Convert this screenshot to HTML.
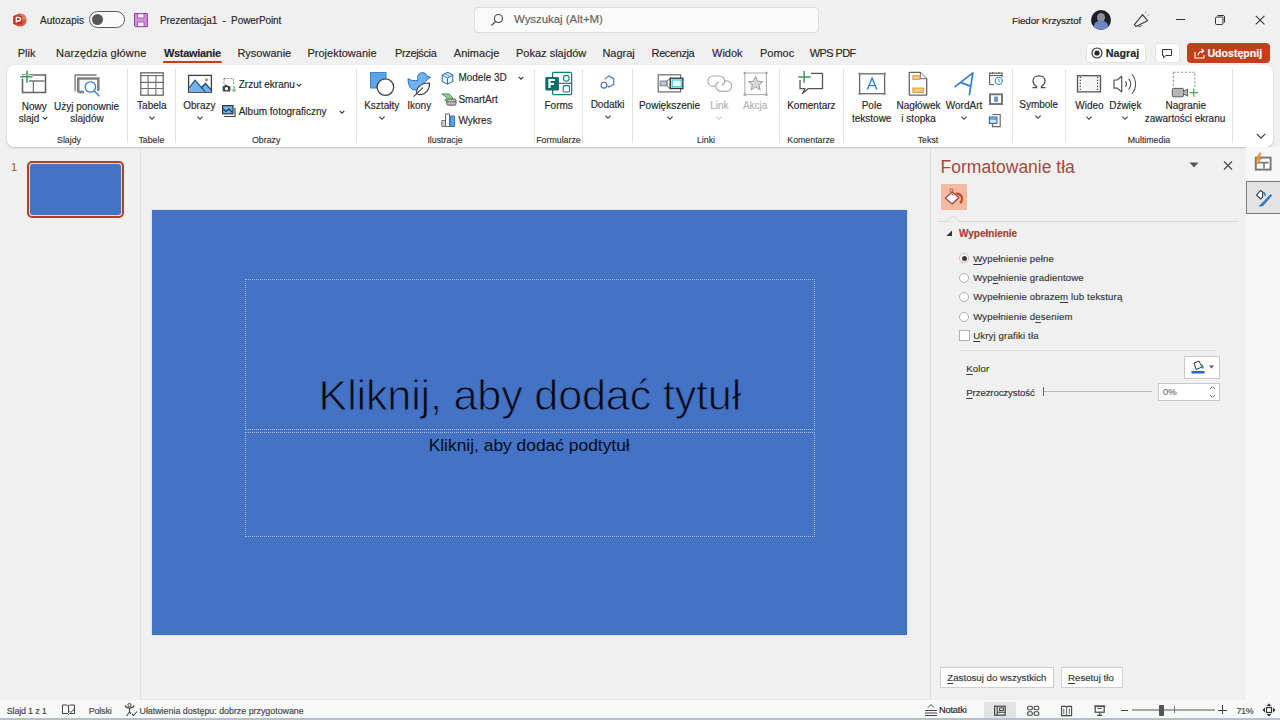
<!DOCTYPE html>
<html><head><meta charset="utf-8"><style>
html,body{margin:0;padding:0;}
body{width:1280px;height:720px;overflow:hidden;position:relative;font-family:"Liberation Sans", sans-serif;}
#root{position:absolute;left:0;top:0;width:1280px;height:720px;overflow:hidden;}
.t{position:absolute;white-space:nowrap;font-family:"Liberation Sans", sans-serif;-webkit-text-stroke:0.15px currentColor;}
u{text-decoration:underline;text-underline-offset:1.5px;text-decoration-thickness:1px}
svg{overflow:visible}
</style></head><body>
<div id="root"><div style="position:absolute;left:0px;top:0px;width:1280px;height:720px;background:#f0f0f0"></div><svg style="position:absolute;left:11px;top:12px" width="18" height="18" viewBox="0 0 18 18" fill="none"><circle cx="9" cy="8" r="6.6" fill="#d9573a"/><path d="M9 1.4 A6.6 6.6 0 0 1 15.6 8 H9 Z" fill="#ee7b5a"/><rect x="2.2" y="3.5" width="9" height="9" rx="1.2" fill="#b63a22"/><path d="M5.3 10.8 V5.4 H7.5 C8.9 5.4 9.6 6.1 9.6 7.2 C9.6 8.3 8.9 9 7.5 9 H5.3" stroke="#fff" stroke-width="1.3"/></svg><div class="t" style="left:40.00px;top:15.84px;font-size:10px;line-height:10px;color:#262626;">Autozapis</div><div style="position:absolute;left:89px;top:11px;width:36px;height:17px;border:1px solid #5a5a5a;border-radius:9px;box-sizing:border-box;background:#fafafa"></div><div style="position:absolute;left:92.3px;top:14.3px;width:11px;height:11px;border-radius:50%;background:#585858"></div><svg style="position:absolute;left:132px;top:11px" width="18" height="18" viewBox="0 0 18 18" fill="none"><path d="M2.5 2.5 H15.3 V15.7 H3.5 L2.5 14.7 Z" fill="#d68ee3" stroke="#8b3d9c" stroke-width="1"/><rect x="5.6" y="2.8" width="6.4" height="4.2" fill="#fff" stroke="#9b4bab" stroke-width=".9"/><rect x="5.6" y="11" width="6.4" height="4.4" fill="#fff" stroke="#9b4bab" stroke-width=".9"/></svg><div class="t" style="left:160.00px;top:15.84px;font-size:10px;line-height:10px;color:#262626;letter-spacing:-0.1px;">Prezentacja1&nbsp; -&nbsp; PowerPoint</div><div style="position:absolute;left:474px;top:7px;width:345px;height:26px;background:#fafafa;border:1px solid #dcdcdc;border-radius:4px;box-sizing:border-box"></div><svg style="position:absolute;left:490px;top:13px" width="14" height="14" viewBox="0 0 14 14" fill="none"><circle cx="8.5" cy="5.5" r="4" stroke="#444" stroke-width="1.1"/><path d="M5.6 8.4 L1.5 12.5" stroke="#444" stroke-width="1.2"/></svg><div class="t" style="left:514.00px;top:14.15px;font-size:11.4px;line-height:11.4px;color:#616161;">Wyszukaj (Alt+M)</div><div class="t" style="left:1012.00px;top:16.00px;font-size:9.8px;line-height:9.8px;color:#262626;letter-spacing:-0.1px;">Fiedor Krzysztof</div><div style="position:absolute;left:1091px;top:10px;width:20px;height:20px;border-radius:50%;overflow:hidden;background:#1c1f2a"><div style="position:absolute;left:6px;top:3px;width:8px;height:9px;border-radius:50%;background:#8c8f9c"></div><div style="position:absolute;left:3px;top:11px;width:14px;height:12px;border-radius:40%;background:#6a88c0"></div></div><svg style="position:absolute;left:1132px;top:10px" width="18" height="18" viewBox="0 0 18 18" fill="none"><path d="M2.4 14.6 L10.6 4.6 L15.6 10.8 L4 16.4 Z" stroke="#3a3a3a" stroke-width="1.1" stroke-linejoin="round"/><path d="M6 15 C6.2 17.2 9 17.4 9.4 15.2" stroke="#3a3a3a" stroke-width="1"/><path d="M13 3.2 L14.2 1.6 M15.4 5.4 L17 4.4" stroke="#5a8fc0" stroke-width=".9"/></svg><div style="position:absolute;left:1176px;top:19px;width:8.5px;height:1px;background:#333"></div><svg style="position:absolute;left:1214px;top:14px" width="12" height="12" viewBox="0 0 12 12" fill="none"><rect x="1.5" y="3" width="7.5" height="7.5" rx="1.2" stroke="#333" stroke-width="1"/><path d="M3.5 1.5 H9 a1.5 1.5 0 0 1 1.5 1.5 V8.5" stroke="#333" stroke-width="1"/></svg><svg style="position:absolute;left:1254px;top:14px" width="12" height="12" viewBox="0 0 12 12" fill="none"><path d="M1.8 1.8 L10.4 10.4 M10.4 1.8 L1.8 10.4" stroke="#333" stroke-width="1.05"/></svg><div class="t" style="left:17.7px;top:47.99px;font-size:11px;line-height:11px;color:#262626;letter-spacing:0px">Plik</div><div class="t" style="left:56px;top:47.99px;font-size:11px;line-height:11px;color:#262626;letter-spacing:0.2px">Narzędzia główne</div><div class="t" style="left:162.4px;top:47.99px;font-size:11px;line-height:11px;color:#262626;font-weight:bold;width:60px;text-align:center;white-space:nowrap;letter-spacing:-0.3px">Wstawianie</div><div class="t" style="left:237.4px;top:47.99px;font-size:11px;line-height:11px;color:#262626;letter-spacing:0px">Rysowanie</div><div class="t" style="left:307.5px;top:47.99px;font-size:11px;line-height:11px;color:#262626;letter-spacing:0px">Projektowanie</div><div class="t" style="left:395px;top:47.99px;font-size:11px;line-height:11px;color:#262626;letter-spacing:-0.35px">Przejścia</div><div class="t" style="left:453.8px;top:47.99px;font-size:11px;line-height:11px;color:#262626;letter-spacing:0.05px">Animacje</div><div class="t" style="left:516px;top:47.99px;font-size:11px;line-height:11px;color:#262626;letter-spacing:0px">Pokaz slajdów</div><div class="t" style="left:602.4px;top:47.99px;font-size:11px;line-height:11px;color:#262626;letter-spacing:0px">Nagraj</div><div class="t" style="left:651.6px;top:47.99px;font-size:11px;line-height:11px;color:#262626;letter-spacing:-0.4px">Recenzja</div><div class="t" style="left:712px;top:47.99px;font-size:11px;line-height:11px;color:#262626;letter-spacing:0px">Widok</div><div class="t" style="left:760px;top:47.99px;font-size:11px;line-height:11px;color:#262626;letter-spacing:0px">Pomoc</div><div class="t" style="left:809.7px;top:47.99px;font-size:11px;line-height:11px;color:#262626;letter-spacing:-0.6px">WPS PDF</div><div style="position:absolute;left:163px;top:61px;width:59px;height:2px;background:#c43e1c;border-radius:1px"></div><div style="position:absolute;left:1086px;top:43px;width:60px;height:20px;background:#fff;border:1px solid #e3e3e3;border-radius:4px;box-sizing:border-box"></div><svg style="position:absolute;left:1091px;top:47px" width="12" height="12" viewBox="0 0 12 12" fill="none"><circle cx="6" cy="6" r="5" stroke="#262626" stroke-width="1.1"/><circle cx="6" cy="6" r="2.6" fill="#262626"/></svg><div class="t" style="left:1105.70px;top:47.86px;font-size:10.8px;line-height:10.8px;color:#262626;font-weight:bold;">Nagraj</div><div style="position:absolute;left:1155px;top:43px;width:25px;height:20px;background:#fff;border:1px solid #e3e3e3;border-radius:4px;box-sizing:border-box"></div><svg style="position:absolute;left:1161px;top:48px" width="12" height="11" viewBox="0 0 12 11" fill="none"><path d="M1.5 1.5 H10.5 V7.5 H5 L2.5 9.8 V7.5 H1.5 Z" stroke="#333" stroke-width="1" stroke-linejoin="round"/></svg><div style="position:absolute;left:1187px;top:43px;width:83px;height:20px;background:#c43e1c;border-radius:4px"></div><svg style="position:absolute;left:1193px;top:47px" width="13" height="12" viewBox="0 0 13 12" fill="none"><path d="M2 5 V11 H11 V8" stroke="#fff" stroke-width="1.1"/><path d="M5 8.5 C5.5 5.5 7.5 4 10.5 4 M8.5 1.8 L10.8 4 L8.5 6.2" stroke="#fff" stroke-width="1.1"/></svg><div class="t" style="left:1207.40px;top:48.03px;font-size:10.6px;line-height:10.6px;color:#ffffff;font-weight:bold;">Udostępnij</div><div style="position:absolute;left:7px;top:65px;width:1266px;height:82px;background:#fff;border-radius:7px;box-shadow:0 1px 2px rgba(0,0,0,.18), 0 0 1px rgba(0,0,0,.12)"></div><div style="position:absolute;left:127px;top:69px;width:1px;height:74px;background:#e1e1e1"></div><div style="position:absolute;left:175px;top:69px;width:1px;height:74px;background:#e1e1e1"></div><div style="position:absolute;left:356px;top:69px;width:1px;height:74px;background:#e1e1e1"></div><div style="position:absolute;left:534px;top:69px;width:1px;height:74px;background:#e1e1e1"></div><div style="position:absolute;left:582px;top:69px;width:1px;height:74px;background:#e1e1e1"></div><div style="position:absolute;left:632px;top:69px;width:1px;height:74px;background:#e1e1e1"></div><div style="position:absolute;left:779px;top:69px;width:1px;height:74px;background:#e1e1e1"></div><div style="position:absolute;left:843px;top:69px;width:1px;height:74px;background:#e1e1e1"></div><div style="position:absolute;left:1012px;top:69px;width:1px;height:74px;background:#e1e1e1"></div><div style="position:absolute;left:1065px;top:69px;width:1px;height:74px;background:#e1e1e1"></div><div style="position:absolute;left:1232px;top:69px;width:1px;height:74px;background:#e1e1e1"></div><div class="t" style="left:-431.00px;width:1000px;text-align:center;top:135.55px;font-size:8.8px;line-height:8.8px;color:#333333;">Slajdy</div><div class="t" style="left:-348.60px;width:1000px;text-align:center;top:135.55px;font-size:8.8px;line-height:8.8px;color:#333333;">Tabele</div><div class="t" style="left:-233.80px;width:1000px;text-align:center;top:135.55px;font-size:8.8px;line-height:8.8px;color:#333333;">Obrazy</div><div class="t" style="left:-55.00px;width:1000px;text-align:center;top:135.55px;font-size:8.8px;line-height:8.8px;color:#333333;">Ilustracje</div><div class="t" style="left:58.50px;width:1000px;text-align:center;top:135.55px;font-size:8.8px;line-height:8.8px;color:#333333;">Formularze</div><div class="t" style="left:206.00px;width:1000px;text-align:center;top:135.55px;font-size:8.8px;line-height:8.8px;color:#333333;">Linki</div><div class="t" style="left:311.00px;width:1000px;text-align:center;top:135.55px;font-size:8.8px;line-height:8.8px;color:#333333;">Komentarze</div><div class="t" style="left:428.00px;width:1000px;text-align:center;top:135.55px;font-size:8.8px;line-height:8.8px;color:#333333;">Tekst</div><div class="t" style="left:649.00px;width:1000px;text-align:center;top:135.55px;font-size:8.8px;line-height:8.8px;color:#333333;">Multimedia</div><div class="t" style="left:-465.80px;width:1000px;text-align:center;top:101.53px;font-size:10px;line-height:10px;color:#262626;">Nowy</div><div class="t" style="left:18.70px;top:114.03px;font-size:10px;line-height:10px;color:#262626;">slajd</div><svg style="position:absolute;left:41.4px;top:115px" width="8" height="6" viewBox="0 0 8 6" fill="none"><path d="M1.7000000000000002 1.85 L4 4.15 L6.3 1.85" stroke="#3a3a3a" stroke-width="1.15"/></svg><div class="t" style="left:-413.50px;width:1000px;text-align:center;top:101.53px;font-size:10px;line-height:10px;color:#262626;">Użyj ponownie</div><div class="t" style="left:-413.00px;width:1000px;text-align:center;top:114.03px;font-size:10px;line-height:10px;color:#262626;">slajdów</div><div class="t" style="left:-348.20px;width:1000px;text-align:center;top:101.03px;font-size:10px;line-height:10px;color:#262626;">Tabela</div><svg style="position:absolute;left:147.5px;top:115.4px" width="8" height="6" viewBox="0 0 8 6" fill="none"><path d="M1.4 1.7 L4 4.3 L6.6 1.7" stroke="#3a3a3a" stroke-width="1.15"/></svg><div class="t" style="left:-300.60px;width:1000px;text-align:center;top:101.03px;font-size:10px;line-height:10px;color:#262626;">Obrazy</div><svg style="position:absolute;left:195.7px;top:115.4px" width="8" height="6" viewBox="0 0 8 6" fill="none"><path d="M1.4 1.7 L4 4.3 L6.6 1.7" stroke="#3a3a3a" stroke-width="1.15"/></svg><div class="t" style="left:238.70px;top:80.03px;font-size:10px;line-height:10px;color:#262626;">Zrzut ekranu</div><svg style="position:absolute;left:295px;top:82px" width="8" height="6" viewBox="0 0 8 6" fill="none"><path d="M1.7000000000000002 1.85 L4 4.15 L6.3 1.85" stroke="#3a3a3a" stroke-width="1.15"/></svg><div class="t" style="left:238.70px;top:106.94px;font-size:10px;line-height:10px;color:#262626;">Album fotograficzny</div><svg style="position:absolute;left:338.4px;top:108.8px" width="8" height="6" viewBox="0 0 8 6" fill="none"><path d="M1.7000000000000002 1.85 L4 4.15 L6.3 1.85" stroke="#3a3a3a" stroke-width="1.15"/></svg><div class="t" style="left:-118.30px;width:1000px;text-align:center;top:101.23px;font-size:10px;line-height:10px;color:#262626;">Kształty</div><svg style="position:absolute;left:377.7px;top:115px" width="8" height="6" viewBox="0 0 8 6" fill="none"><path d="M1.4 1.7 L4 4.3 L6.6 1.7" stroke="#3a3a3a" stroke-width="1.15"/></svg><div class="t" style="left:-80.80px;width:1000px;text-align:center;top:101.23px;font-size:10px;line-height:10px;color:#262626;">Ikony</div><div class="t" style="left:458.40px;top:73.33px;font-size:10px;line-height:10px;color:#262626;">Modele 3D</div><svg style="position:absolute;left:516.7px;top:74.5px" width="8" height="6" viewBox="0 0 8 6" fill="none"><path d="M1.7000000000000002 1.85 L4 4.15 L6.3 1.85" stroke="#3a3a3a" stroke-width="1.15"/></svg><div class="t" style="left:458.40px;top:94.94px;font-size:10px;line-height:10px;color:#262626;">SmartArt</div><div class="t" style="left:458.40px;top:115.94px;font-size:10px;line-height:10px;color:#262626;">Wykres</div><div class="t" style="left:58.70px;width:1000px;text-align:center;top:100.83px;font-size:10px;line-height:10px;color:#262626;">Forms</div><div class="t" style="left:107.60px;width:1000px;text-align:center;top:99.53px;font-size:10px;line-height:10px;color:#262626;">Dodatki</div><svg style="position:absolute;left:603.7px;top:113.7px" width="8" height="6" viewBox="0 0 8 6" fill="none"><path d="M1.4 1.7 L4 4.3 L6.6 1.7" stroke="#3a3a3a" stroke-width="1.15"/></svg><div class="t" style="left:169.50px;width:1000px;text-align:center;top:100.83px;font-size:10px;line-height:10px;color:#262626;">Powiększenie</div><svg style="position:absolute;left:665.6px;top:115px" width="8" height="6" viewBox="0 0 8 6" fill="none"><path d="M1.4 1.7 L4 4.3 L6.6 1.7" stroke="#3a3a3a" stroke-width="1.15"/></svg><div class="t" style="left:219.40px;width:1000px;text-align:center;top:100.83px;font-size:10px;line-height:10px;color:#b0b0b0;">Link</div><svg style="position:absolute;left:715.2px;top:115px" width="8" height="6" viewBox="0 0 8 6" fill="none"><path d="M1.4 1.7 L4 4.3 L6.6 1.7" stroke="#c8c8c8" stroke-width="1.15"/></svg><div class="t" style="left:255.20px;width:1000px;text-align:center;top:100.83px;font-size:10px;line-height:10px;color:#b0b0b0;">Akcja</div><div class="t" style="left:311.40px;width:1000px;text-align:center;top:100.83px;font-size:10px;line-height:10px;color:#262626;">Komentarz</div><div class="t" style="left:371.70px;width:1000px;text-align:center;top:100.83px;font-size:10px;line-height:10px;color:#262626;">Pole</div><div class="t" style="left:371.70px;width:1000px;text-align:center;top:113.83px;font-size:10px;line-height:10px;color:#262626;">tekstowe</div><div class="t" style="left:418.50px;width:1000px;text-align:center;top:100.83px;font-size:10px;line-height:10px;color:#262626;">Nagłówek</div><div class="t" style="left:418.60px;width:1000px;text-align:center;top:113.83px;font-size:10px;line-height:10px;color:#262626;">i stopka</div><div class="t" style="left:464.00px;width:1000px;text-align:center;top:100.83px;font-size:10px;line-height:10px;color:#262626;">WordArt</div><svg style="position:absolute;left:959.5px;top:115px" width="8" height="6" viewBox="0 0 8 6" fill="none"><path d="M1.4 1.7 L4 4.3 L6.6 1.7" stroke="#3a3a3a" stroke-width="1.15"/></svg><div class="t" style="left:538.70px;width:1000px;text-align:center;top:100.03px;font-size:10px;line-height:10px;color:#262626;">Symbole</div><svg style="position:absolute;left:1034px;top:113.7px" width="8" height="6" viewBox="0 0 8 6" fill="none"><path d="M1.4 1.7 L4 4.3 L6.6 1.7" stroke="#3a3a3a" stroke-width="1.15"/></svg><div class="t" style="left:589.50px;width:1000px;text-align:center;top:101.03px;font-size:10px;line-height:10px;color:#262626;">Wideo</div><svg style="position:absolute;left:1084.7px;top:115px" width="8" height="6" viewBox="0 0 8 6" fill="none"><path d="M1.4 1.7 L4 4.3 L6.6 1.7" stroke="#3a3a3a" stroke-width="1.15"/></svg><div class="t" style="left:625.30px;width:1000px;text-align:center;top:101.03px;font-size:10px;line-height:10px;color:#262626;">Dźwięk</div><svg style="position:absolute;left:1120.6px;top:115px" width="8" height="6" viewBox="0 0 8 6" fill="none"><path d="M1.4 1.7 L4 4.3 L6.6 1.7" stroke="#3a3a3a" stroke-width="1.15"/></svg><div class="t" style="left:685.80px;width:1000px;text-align:center;top:101.03px;font-size:10px;line-height:10px;color:#262626;">Nagranie</div><div class="t" style="left:685.00px;width:1000px;text-align:center;top:113.83px;font-size:10px;line-height:10px;color:#262626;">zawartości ekranu</div><svg style="position:absolute;left:1257px;top:132.7px" width="8" height="6" viewBox="0 0 8 6" fill="none"><path d="M-0.20000000000000018 0.8999999999999999 L4 5.1 L8.2 0.8999999999999999" stroke="#333" stroke-width="1.15"/></svg><svg style="position:absolute;left:18px;top:68px" width="32" height="30" viewBox="0 0 32 30" fill="none"><path d="M4.5 7 H27.5 V24.5 H4.5 Z" stroke="#666" stroke-width="1.6"/><path d="M11 13 H26.5 M15.4 13 V24" stroke="#777" stroke-width="1.3"/><rect x="5.3" y="7.8" width="21.4" height="15.9" fill="none"/><path d="M2.3 8.8 H14.6 M9 2.8 V14.8" stroke="#fff" stroke-width="3.2"/><path d="M2.3 8.8 H14.6 M9 2.8 V14.8" stroke="#3f9a5c" stroke-width="1.6"/></svg><svg style="position:absolute;left:72px;top:72px" width="30" height="28" viewBox="0 0 30 28" fill="none"><path d="M3.1 19.2 V3 H24.6" stroke="#777" stroke-width="1.3"/><path d="M6.2 20 V6.5 H26.3 V19" stroke="#808080" stroke-width="2.6"/><path d="M6.2 20 H12" stroke="#808080" stroke-width="2.6"/><circle cx="18.4" cy="15" r="5.2" fill="#fff" stroke="#2f7fd0" stroke-width="1.3"/><path d="M22.2 18.8 L27.4 24.3" stroke="#2f7fd0" stroke-width="1.3"/></svg><svg style="position:absolute;left:138px;top:70px" width="28" height="28" viewBox="0 0 28 28" fill="none"><rect x="2.8" y="2.8" width="22.4" height="22.4" stroke="#666" stroke-width="1.3" fill="#fff"/><path d="M2.8 5.6 H25.2" stroke="#6a6a6a" stroke-width="1.1"/><path d="M2.8 12.4 H25.2 M2.8 18.5 H25.2 M10.1 5.6 V25 M17.9 5.6 V25" stroke="#707070" stroke-width="1.1"/></svg><svg style="position:absolute;left:186px;top:73px" width="28" height="22" viewBox="0 0 28 22" fill="none"><rect x="2.6" y="2.4" width="22.8" height="16.8" stroke="#3c3c3c" stroke-width="1.3" fill="#fff"/><path d="M3.2 15 L9 7.2 L19 18.6 H3.2 Z" fill="#6db3ee"/><path d="M14.5 13.5 L19.5 9.8 L25 16.5 V18.6 H19 Z" fill="#6db3ee"/><path d="M3 15 L9 7.2 L19.3 18.8 M16 14.5 L19.5 10.5 L25.2 17" stroke="#284a74" stroke-width="1.2"/><circle cx="20.5" cy="6.7" r="1.5" fill="#d87a34"/></svg><svg style="position:absolute;left:220px;top:76px" width="18" height="18" viewBox="0 0 18 18" fill="none"><path d="M4 2.5 H13.5 V9" stroke="#888" stroke-width="1" stroke-dasharray="2 1.3"/><path d="M4 2.5 V9" stroke="#888" stroke-width="1" stroke-dasharray="2 1.3"/><rect x="2.6" y="10" width="7.8" height="5.5" rx="1" fill="#444"/><rect x="4.5" y="8.8" width="3" height="1.5" fill="#444"/><circle cx="6.5" cy="12.7" r="1.6" fill="#fff"/><path d="M14 10 V15.5 M12 13.5 L14 15.5 L16 13.5" stroke="#3f9a5c" stroke-width="1"/></svg><svg style="position:absolute;left:220px;top:103px" width="18" height="16" viewBox="0 0 18 16" fill="none"><path d="M4 13.5 H15 V5" stroke="#444" stroke-width="1.2"/><rect x="2.6" y="2.6" width="10.4" height="8.2" fill="#6db3ee" stroke="#333" stroke-width="1.2"/><path d="M3 6 L6 8.5 L9 6 L12.5 9.5" stroke="#1e3f6e" stroke-width="1.3"/></svg><svg style="position:absolute;left:368px;top:70px" width="28" height="30" viewBox="0 0 28 30" fill="none"><rect x="2.5" y="2.5" width="15.5" height="15.5" fill="#5aa5e6" stroke="#3a87d0" stroke-width="1"/><circle cx="17.4" cy="17.1" r="8.3" fill="#fff" stroke="#404040" stroke-width="1.3"/></svg><svg style="position:absolute;left:404px;top:68px" width="32" height="32" viewBox="0 0 32 32" fill="none"><path d="M4 10.6 C6.5 12.6 11 13.2 14.2 12.2 C13.4 11 13.4 9.8 13.6 8.8 C14.2 6.2 16.2 4.6 18.5 4.6 C20.9 4.6 22.7 6.3 23.1 8.3 L26.6 9.3 L23 11.5 C22.3 13.3 20.8 14.6 19 15.1 C18.6 16.6 17 18.8 13.8 21.2 C12.3 22.2 9.6 22.3 8 21.2 C5.2 19.2 4 15.5 4 10.6 Z" fill="#6db3ee" stroke="#2a6fb5" stroke-width="1"/><path d="M12.6 25.6 C12.2 20 15.5 15.2 25.6 15 C25.6 22 21.6 26.6 15.6 26.6 C14.2 26.6 13.2 26.2 12.6 25.6 Z" fill="#fff" stroke="#3d3d3d" stroke-width="1.1"/><path d="M9.5 28.6 L19 19.6" stroke="#3d3d3d" stroke-width="1.1"/></svg><svg style="position:absolute;left:440px;top:70px" width="16" height="16" viewBox="0 0 16 16" fill="none"><path d="M7.5 2.3 L12.8 5.1 V11.4 L7.5 14.2 L2.2 11.4 V5.1 Z" fill="#e9f3fc" stroke="#2f73c0" stroke-width="1.1"/><path d="M2.4 5.3 L7.5 8 L12.6 5.3 M7.5 8 V14" stroke="#2f73c0" stroke-width="1"/><path d="M5 3.8 L10.3 6.6" stroke="#2f73c0" stroke-width=".8"/></svg><svg style="position:absolute;left:440px;top:92px" width="18" height="14" viewBox="0 0 18 14" fill="none"><path d="M1.8 2 H9 L13 6 L9.8 8.6 H4.8 L7 5.6 Z" fill="#8ccf8c" stroke="#3f9a5c" stroke-width="1"/><rect x="6.8" y="7" width="9.2" height="6.2" rx="1.5" fill="#bdbdbd" stroke="#5a5a5a" stroke-width="1"/><path d="M6.8 9.8 H16" stroke="#5a5a5a" stroke-width=".8"/></svg><svg style="position:absolute;left:440px;top:112px" width="18" height="18" viewBox="0 0 18 18" fill="none"><path d="M1.8 14.5 H5.6 V8.5 H1.8 Z" fill="#ccc" stroke="#777" stroke-width="1"/><path d="M5.6 14.5 H9.5 V2 H5.6 Z" fill="#fff" stroke="#666" stroke-width="1"/><path d="M10.2 14.5 H14.6 V4 H10.2 Z" fill="#5aa5e6" stroke="#2f73c0" stroke-width="1"/></svg><svg style="position:absolute;left:543px;top:70px" width="32" height="28" viewBox="0 0 32 28" fill="none"><rect x="9.6" y="2.3" width="19" height="22.3" rx="1" fill="#fff" stroke="#12807a" stroke-width="1.3"/><path d="M9.6 13.3 H28.6" stroke="#12807a" stroke-width="1.2"/><circle cx="23.3" cy="8.3" r="2.9" stroke="#12807a" stroke-width="1.1"/><rect x="20.3" y="15.6" width="6.2" height="6.4" rx="1" stroke="#12807a" stroke-width="1.1"/><rect x="2.3" y="7" width="13.6" height="13.6" rx="1" fill="#0b6e69"/><path d="M6.5 18 V10 H12 M6.5 14 H11" stroke="#fff" stroke-width="2.2"/></svg><svg style="position:absolute;left:598px;top:72px" width="20" height="18" viewBox="0 0 20 18" fill="none"><path d="M7.2 7.6 L7.2 6.65 L11 3.9 L15.8 6.65 V12.15 L11 14.9 L9.6 14.1" stroke="#3b6fb6" stroke-width="1.1" stroke-linejoin="round"/><circle cx="6" cy="13.2" r="2.9" stroke="#3b6fb6" stroke-width="1.1"/></svg><svg style="position:absolute;left:656px;top:72px" width="30" height="22" viewBox="0 0 30 22" fill="none"><rect x="2.2" y="2.8" width="22.4" height="17.1" fill="#fff" stroke="#6a6a6a" stroke-width="1.2"/><rect x="4.2" y="9" width="6.8" height="4.8" fill="#b7c9d6" stroke="#6f8797" stroke-width="1"/><path d="M11 9 L14.3 6.2 V16.5 L11 13.8 Z" fill="#fff" stroke="#6a6a6a" stroke-width="1"/><rect x="14.3" y="6.2" width="12.6" height="10.3" fill="#dff4fb" stroke="#333" stroke-width="1.3"/><rect x="16.2" y="8" width="9" height="6.7" fill="#fff" stroke="#36b6d6" stroke-width="1"/></svg><svg style="position:absolute;left:706px;top:73px" width="28" height="22" viewBox="0 0 28 22" fill="none"><path d="M9.5 13.4 H7.4 C4.3 13.4 2 11.1 2 8.2 C2 5.3 4.3 3 7.4 3 H13.3 C16.3 3 18.6 5.3 18.6 8.2 C18.6 9.8 17.5 11.4 15.8 12.2" stroke="#a9a9a9" stroke-width="1.2"/><path d="M12.6 9 C10.9 9.8 9.8 11.3 9.8 13 C9.8 15.9 12.1 18.3 15 18.3 H20.4 C23.5 18.3 25.7 15.9 25.7 13 C25.7 10.1 23.5 7.8 20.4 7.8 H18.8" stroke="#a9a9a9" stroke-width="1.2"/></svg><svg style="position:absolute;left:742px;top:70px" width="28" height="28" viewBox="0 0 28 28" fill="none"><rect x="2.8" y="3" width="21.6" height="21.6" stroke="#b0b0b0" stroke-width="1.1"/><rect x="1.6" y="1.8" width="2.4" height="2.4" fill="#aaa"/><rect x="23.2" y="1.8" width="2.4" height="2.4" fill="#aaa"/><rect x="1.6" y="23.4" width="2.4" height="2.4" fill="#aaa"/><rect x="23.2" y="23.4" width="2.4" height="2.4" fill="#aaa"/><path d="M13.6 6.5 L15.7 11.2 L20.7 11.6 L16.8 14.8 L18.1 19.8 L13.6 17 L9.1 19.8 L10.4 14.8 L6.5 11.6 L11.5 11.2 Z" fill="#d9d9d9" stroke="#9a9a9a" stroke-width="1"/></svg><svg style="position:absolute;left:796px;top:68px" width="30" height="30" viewBox="0 0 30 30" fill="none"><path d="M4 12 V20.7 H9 L6.4 25.5 L12 20.7 H26.5 V5.4 H15" stroke="#555" stroke-width="1.3" stroke-linejoin="round"/><path d="M2.2 8.9 H14.7 M8.1 3 V14.8" stroke="#3f9a5c" stroke-width="1.5"/></svg><svg style="position:absolute;left:857px;top:71px" width="30" height="26" viewBox="0 0 30 26" fill="none"><rect x="2.6" y="2.8" width="25" height="19.9" stroke="#666" stroke-width="1.3"/><circle cx="2.6" cy="2.8" r="1.3" fill="#5b8db8"/><circle cx="27.6" cy="2.8" r="1.3" fill="#5b8db8"/><circle cx="2.6" cy="22.7" r="1.3" fill="#5b8db8"/><circle cx="27.6" cy="22.7" r="1.3" fill="#5b8db8"/><path d="M10.4 18.4 L15.1 7.1 L19.8 18.4 M12 14.6 H18.2" stroke="#2f7fd0" stroke-width="1.4"/></svg><svg style="position:absolute;left:907px;top:70px" width="22" height="28" viewBox="0 0 22 28" fill="none"><path d="M2.3 2.4 H13.4 L19.7 8.7 V25.1 H2.3 Z" fill="#fff" stroke="#666" stroke-width="1.3" stroke-linejoin="round"/><path d="M13.4 2.4 V8.7 H19.7" fill="#fff" stroke="#666" stroke-width="1"/><rect x="5.9" y="5.6" width="7.2" height="4" fill="#f6c679" stroke="#dc9440" stroke-width=".9"/><rect x="5.9" y="18" width="10.7" height="4.5" fill="#f6c679" stroke="#dc9440" stroke-width=".9"/></svg><svg style="position:absolute;left:952px;top:70px" width="24" height="28" viewBox="0 0 24 28" fill="none"><path d="M3.1 16.7 L20.9 2.9 L17.4 24.7 M9.2 12.6 L18.6 16.1" stroke="#2f7fd0" stroke-width="1.7" stroke-linecap="round" stroke-linejoin="round"/></svg><svg style="position:absolute;left:987px;top:70px" width="18" height="18" viewBox="0 0 18 18" fill="none"><path d="M2.6 14.6 V3.2 H15.1 V7" stroke="#666" stroke-width="1.2"/><path d="M2.6 5.5 H15.1" stroke="#666" stroke-width="1.2"/><path d="M5.5 2 V4 M12 2 V4" stroke="#666" stroke-width="1"/><path d="M2.6 14.6 H7" stroke="#666" stroke-width="1.2"/><circle cx="11.7" cy="10.9" r="3.6" fill="#fff" stroke="#2f7fd0" stroke-width="1.1"/><path d="M11.7 9 V11 L13 12" stroke="#2f7fd0" stroke-width=".9"/></svg><svg style="position:absolute;left:987px;top:91px" width="18" height="16" viewBox="0 0 18 16" fill="none"><rect x="3" y="3.3" width="12" height="9.7" fill="#fff" stroke="#777" stroke-width="2"/><rect x="7.8" y="6" width="2.6" height="4.5" fill="#5aa5e6" stroke="#2f73c0" stroke-width=".7"/></svg><svg style="position:absolute;left:987px;top:112px" width="18" height="18" viewBox="0 0 18 18" fill="none"><path d="M5.5 2.5 H13.2 V14.6 H5.5 V11.5" stroke="#666" stroke-width="1.2"/><rect x="2.4" y="5" width="7.5" height="6.4" fill="#d7eafb" stroke="#2f73c0" stroke-width="1.2"/><path d="M2.4 7 H9.9" stroke="#2f73c0" stroke-width="1.1"/></svg><svg style="position:absolute;left:1030px;top:74px" width="18" height="16" viewBox="0 0 18 16" fill="none"><path d="M2.5 13.6 H6.6 V12.4 C4 11 3 8.6 3 6.8 C3 3.8 5.6 1.8 9 1.8 C12.4 1.8 15 3.8 15 6.8 C15 8.6 14 11 11.4 12.4 V13.6 H15.5" stroke="#444" stroke-width="1.15"/></svg><svg style="position:absolute;left:1075px;top:73px" width="28" height="22" viewBox="0 0 28 22" fill="none"><rect x="2.5" y="2.7" width="23" height="16.2" stroke="#555" stroke-width="1.3" fill="#f5f5f5"/><path d="M5.3 3.8 V18 M22.6 3.8 V18" stroke="#333" stroke-width="1.1" stroke-dasharray="1.2 1.8"/></svg><svg style="position:absolute;left:1111px;top:71px" width="28" height="26" viewBox="0 0 28 26" fill="none"><path d="M3 9 H6.3 L10.7 5.3 V20.8 L6.3 17.2 H3 Z" stroke="#555" stroke-width="1.2" stroke-linejoin="round"/><path d="M14.5 10.3 C15.7 12 15.7 14.3 14.5 16" stroke="#555" stroke-width="1.1"/><path d="M17.6 7.6 C20.2 11 20.2 15.3 17.6 18.6" stroke="#555" stroke-width="1.1"/><path d="M20.8 3 C25.8 8.5 25.8 17.6 20.8 23" stroke="#555" stroke-width="1.1"/></svg><svg style="position:absolute;left:1170px;top:70px" width="30" height="30" viewBox="0 0 30 30" fill="none"><path d="M3.4 2.2 H24.8 V17 M3.4 2.2 V17" stroke="#999" stroke-width="1.1" stroke-dasharray="2.2 1.6"/><rect x="2.3" y="18.4" width="11.2" height="8.4" rx="1" fill="#b5b5b5" stroke="#5a5a5a" stroke-width="1"/><path d="M13.5 21.6 L17.6 19 V26.2 L13.5 23.6" fill="#b5b5b5" stroke="#5a5a5a" stroke-width="1"/><path d="M19.5 22.6 H28 M23.8 18.4 V26.8" stroke="#3aa75c" stroke-width="1.2"/></svg><div style="position:absolute;left:140px;top:147px;width:1px;height:553px;background:#e0e0e0"></div><div class="t" style="left:11px;top:161.5px;font-size:11px;line-height:11px;color:#b0574a">1</div><div style="position:absolute;left:27px;top:161px;width:97px;height:57px;border:2px solid #a8432c;border-radius:5px;box-sizing:border-box;background:#ecd6d6"></div><div style="position:absolute;left:30px;top:164px;width:91px;height:51px;background:#4472c4;border-radius:3px"></div><div style="position:absolute;left:152px;top:210px;width:755px;height:425px;background:#4472c4;box-shadow:0 0 2px rgba(0,0,0,.15)"></div><div style="position:absolute;left:245px;top:279px;width:570px;height:151px;border:1px dotted #a9bde6;box-sizing:border-box"></div><div style="position:absolute;left:245px;top:432px;width:570px;height:105px;border:1px dotted #a9bde6;box-sizing:border-box"></div><div class="t" style="left:29.80px;width:1000px;text-align:center;top:373.73px;font-size:43.2px;line-height:43.2px;color:#060a16;letter-spacing:-0.2px;-webkit-text-stroke:1.0px #4472c4">Kliknij, aby dodać tytuł</div><div class="t" style="left:29.20px;width:1000px;text-align:center;top:436.87px;font-size:17.4px;line-height:17.4px;color:#070b18;-webkit-text-stroke:0">Kliknij, aby dodać podtytuł</div><div style="position:absolute;left:930px;top:147px;width:1px;height:553px;background:#dedede"></div><div style="position:absolute;left:1246px;top:147px;width:34px;height:553px;background:#f7f7f7"></div><div class="t" style="left:940.60px;top:158.69px;font-size:17.5px;line-height:17.5px;color:#a4493e;-webkit-text-stroke:0">Formatowanie tła</div><svg style="position:absolute;left:1189px;top:162px" width="10" height="6" viewBox="0 0 10 6" fill="none"><path d="M0.5 0.5 H9.5 L5 5.5 Z" fill="#555"/></svg><svg style="position:absolute;left:1223px;top:161px" width="10" height="9" viewBox="0 0 10 9" fill="none"><path d="M1 0.5 L9 8.5 M9 0.5 L1 8.5" stroke="#444" stroke-width="1.1"/></svg><div style="position:absolute;left:941px;top:184px;width:26px;height:26px;background:#f2b9a3"></div><svg style="position:absolute;left:938px;top:180px" width="34" height="34" viewBox="0 0 34 34" fill="none"><path d="M18 13.4 C21.8 13.6 24.4 15.8 24.1 18.8 C23.9 20.6 23.1 22 22.2 23.2" stroke="#c9492b" stroke-width="2.3"/><path d="M7.3 18.2 L14.2 12 L20.8 17.5 L14.2 24 Z" fill="#fff" stroke="#9b3b2e" stroke-width="1.1" stroke-linejoin="round"/><circle cx="13.5" cy="10.4" r="1.6" fill="none" stroke="#b5503d" stroke-width="0.9"/><rect x="13.6" y="13.8" width="1.4" height="1.6" fill="#9b4b55"/></svg><svg style="position:absolute;left:938px;top:213px" width="300" height="10" viewBox="0 0 300 10" fill="none"><path d="M0 8.5 H9 L15 2.5 L21 8.5 H300" stroke="#d6d6d6" stroke-width="1"/></svg><svg style="position:absolute;left:945px;top:229px" width="8" height="8" viewBox="0 0 8 8" fill="none"><path d="M7 1.4 V7 H1.4 Z" fill="#333"/></svg><div class="t" style="left:959.00px;top:228.94px;font-size:10px;line-height:10px;color:#a63d2c;font-weight:bold;">Wypełnienie</div><div style="position:absolute;left:959px;top:253.39999999999998px;width:10px;height:10px;border:1px solid #b0b0b0;border-radius:50%;box-sizing:border-box;background:#fff"></div><div class="t" style="left:973.20px;top:253.67px;font-size:9.6px;line-height:9.6px;color:#363636;letter-spacing:0.15px;"><u>W</u>ypełnienie pełne</div><div style="position:absolute;left:959px;top:273px;width:10px;height:10px;border:1px solid #b0b0b0;border-radius:50%;box-sizing:border-box;background:#fff"></div><div class="t" style="left:973.20px;top:273.27px;font-size:9.6px;line-height:9.6px;color:#363636;letter-spacing:0.15px;">Wyp<u>e</u>łnienie gradientowe</div><div style="position:absolute;left:959px;top:292.2px;width:10px;height:10px;border:1px solid #b0b0b0;border-radius:50%;box-sizing:border-box;background:#fff"></div><div class="t" style="left:973.20px;top:292.47px;font-size:9.6px;line-height:9.6px;color:#363636;letter-spacing:0.15px;">Wypełnienie obraze<u>m</u> lub teksturą</div><div style="position:absolute;left:959px;top:311.5px;width:10px;height:10px;border:1px solid #b0b0b0;border-radius:50%;box-sizing:border-box;background:#fff"></div><div class="t" style="left:973.20px;top:311.77px;font-size:9.6px;line-height:9.6px;color:#363636;letter-spacing:0.15px;">Wypełnienie d<u>e</u>seniem</div><div style="position:absolute;left:959px;top:253.4px;width:10px;height:10px;border:1px solid #e2b9ad;border-radius:50%;box-sizing:border-box;background:#fff"></div><div style="position:absolute;left:961.5px;top:255.9px;width:5px;height:5px;border-radius:50%;background:#3a3a3a"></div><div style="position:absolute;left:959px;top:330px;width:11px;height:11px;border:1px solid #b0b0b0;box-sizing:border-box;background:#fff"></div><div class="t" style="left:973.20px;top:330.87px;font-size:9.6px;line-height:9.6px;color:#363636;letter-spacing:0.15px;"><u>U</u>kryj grafiki tła</div><div style="position:absolute;left:959px;top:350px;width:258px;height:1px;background:#dcdcdc"></div><div class="t" style="left:966.30px;top:364.47px;font-size:9.6px;line-height:9.6px;color:#363636;letter-spacing:0.1px;"><u>K</u>olor</div><div style="position:absolute;left:1184px;top:356px;width:36px;height:23px;background:#fff;border:1px solid #c8c8c8;box-sizing:border-box"></div><svg style="position:absolute;left:1188px;top:359px" width="28" height="17" viewBox="0 0 28 17" fill="none"><path d="M6 4 L11 2 L14 8 L8 10.5 Z" stroke="#333" stroke-width="1" fill="#fff"/><path d="M13.5 6 C15 6 15.5 8 14.5 9.5" stroke="#1f6fc5" stroke-width="1.2"/><rect x="3.5" y="12" width="13" height="2.5" fill="#2f63c6"/><path d="M21 6.5 H26 L23.5 9.5 Z" fill="#555"/></svg><div class="t" style="left:966.30px;top:388.17px;font-size:9.6px;line-height:9.6px;color:#363636;letter-spacing:-0.1px;"><u>P</u>rzezroczystość</div><div style="position:absolute;left:1043px;top:387px;width:1px;height:9px;background:#666"></div><div style="position:absolute;left:1044px;top:391px;width:108px;height:1px;background:#bdbdbd"></div><div style="position:absolute;left:1158px;top:383px;width:62px;height:18px;background:#fff;border:1px solid #c8c8c8;box-sizing:border-box"></div><div class="t" style="left:1163.00px;top:387.26px;font-size:9.5px;line-height:9.5px;color:#6a6a6a;">0%</div><svg style="position:absolute;left:1208px;top:384px" width="9" height="16" viewBox="0 0 9 16" fill="none"><path d="M2 5 L4.5 2.5 L7 5 M2 11 L4.5 13.5 L7 11" stroke="#555" stroke-width="0.9"/></svg><div style="position:absolute;left:940px;top:667px;width:114px;height:21px;background:#fdfdfd;border:1px solid #cfcfcf;box-sizing:border-box"></div><div class="t" style="left:947.30px;top:673.09px;font-size:9.7px;line-height:9.7px;color:#363636;"><u>Z</u>astosuj do wszystkich</div><div style="position:absolute;left:1061px;top:667px;width:62px;height:21px;background:#fdfdfd;border:1px solid #cfcfcf;box-sizing:border-box"></div><div class="t" style="left:1068.00px;top:673.09px;font-size:9.7px;line-height:9.7px;color:#363636;"><u>R</u>esetuj tło</div><svg style="position:absolute;left:1246px;top:150px" width="34" height="24" viewBox="0 0 34 24" fill="none"><rect x="9.8" y="7.6" width="14.8" height="12" stroke="#7a7a7a" stroke-width="2" fill="#fff"/><path d="M12 12.6 H22.5 M18 12.6 V18.6" stroke="#7a7a7a" stroke-width="1.6"/><path d="M13.6 3 L9.6 10.2 H12.4 L10.4 15 L15.4 8.4 H12.8 L15 3 Z" fill="#f2a516" stroke="#e07b10" stroke-width=".6"/></svg><div style="position:absolute;left:1246px;top:181px;width:35px;height:33px;background:#e3e3e3;border:1.5px solid #7b7b7b;box-sizing:border-box"></div><svg style="position:absolute;left:1246px;top:181px" width="34" height="33" viewBox="0 0 34 33" fill="none"><path d="M10.5 14.2 L14.5 9.5 L16.6 11 V15.8 L14.8 18 Z" stroke="#333" stroke-width="1.1" fill="#fff" stroke-linejoin="round"/><path d="M16.6 11.5 C18.5 11.5 19.5 13 19 15" stroke="#2f73c0" stroke-width="1.4"/><path d="M25.5 14.5 L18 23.5 C16.8 24.8 15.4 25.2 13.5 25 C15 23.8 15.8 22 16.8 21.8 L24.6 13.6 Z" fill="#3d8ad6" stroke="#1f5fa8" stroke-width=".9"/></svg><div style="position:absolute;left:0px;top:700px;width:1280px;height:18px;background:#f8f8f8"></div><div style="position:absolute;left:141px;top:699px;width:789px;height:1px;background:#e6e6e6"></div><div style="position:absolute;left:0px;top:717.5px;width:1280px;height:2.5px;background:#b4c2c7"></div><div class="t" style="left:6.80px;top:706.58px;font-size:9px;line-height:9px;color:#444;letter-spacing:-0.2px;">Slajd 1 z 1</div><svg style="position:absolute;left:61px;top:703px" width="15" height="13" viewBox="0 0 15 13" fill="none"><path d="M1.5 2 H6.5 L7.5 3 L8.5 2 H13.5 V10.5 H8.5 L7.5 11.5 L6.5 10.5 H1.5 Z" stroke="#444" stroke-width="1"/><path d="M7.5 3 V10" stroke="#444" stroke-width="1"/><path d="M8.5 8 L10 9.5 L13 6" stroke="#444" stroke-width="1"/></svg><div class="t" style="left:88.70px;top:706.58px;font-size:9px;line-height:9px;color:#444;letter-spacing:-0.2px;">Polski</div><svg style="position:absolute;left:123px;top:702px" width="16" height="16" viewBox="0 0 16 16" fill="none"><circle cx="6.5" cy="3" r="1.6" stroke="#444" stroke-width="1"/><path d="M2 3.5 C3 6 5 6 6.5 6 C8 6 10 6 11 3.5 M6.5 6 V10 L3.5 14 M6.5 10 L8 11.5" stroke="#444" stroke-width="1.1"/><path d="M9 12 L10.5 13.5 L14 9.5" stroke="#444" stroke-width="1.1"/></svg><div class="t" style="left:139.50px;top:706.71px;font-size:8.85px;line-height:8.85px;color:#444;">Ułatwienia dostępu: dobrze przygotowane</div><svg style="position:absolute;left:924px;top:703px" width="14" height="14" viewBox="0 0 14 14" fill="none"><path d="M1 7.5 H13 M1 10 H13 M1 12.5 H13" stroke="#444" stroke-width="1"/><path d="M4 4.5 L7 1.5 L10 4.5" stroke="#444" stroke-width="1"/></svg><div class="t" style="left:939.00px;top:706.33px;font-size:9.3px;line-height:9.3px;color:#262626;letter-spacing:-0.2px;">Notatki</div><div style="position:absolute;left:984px;top:702px;width:32px;height:16px;background:#e3e3e3"></div><svg style="position:absolute;left:990px;top:702px" width="20" height="16" viewBox="0 0 20 16" fill="none"><rect x="4.6" y="4.2" width="10.6" height="9" stroke="#444" stroke-width="1.2"/><path d="M7.2 4.2 V13.2 M7.2 10.3 H15.2" stroke="#444" stroke-width="1.1"/><rect x="9.6" y="5.9" width="3.8" height="2.6" stroke="#444" stroke-width="1"/></svg><svg style="position:absolute;left:1023px;top:702px" width="20" height="16" viewBox="0 0 20 16" fill="none"><rect x="4.7" y="4.2" width="4.6" height="3.6" rx="1" stroke="#444" stroke-width="1.1"/><rect x="11.2" y="4.2" width="4.6" height="3.6" rx="1" stroke="#444" stroke-width="1.1"/><rect x="4.7" y="9.7" width="4.6" height="3.6" rx="1" stroke="#444" stroke-width="1.1"/><rect x="11.2" y="9.7" width="4.6" height="3.6" rx="1" stroke="#444" stroke-width="1.1"/></svg><svg style="position:absolute;left:1057px;top:702px" width="20" height="16" viewBox="0 0 20 16" fill="none"><path d="M4.6 4.4 H8.6 L9.6 5 L10.6 4.4 H14.6 V13.6 H10.6 L9.6 14 L8.6 13.6 H4.6 Z" stroke="#444" stroke-width="1.1" stroke-linejoin="round"/><path d="M9.6 5 V13.6 M6.8 6.5 V11.8 M12.4 6.5 V11.8" stroke="#555" stroke-width=".9"/></svg><svg style="position:absolute;left:1090px;top:702px" width="20" height="16" viewBox="0 0 20 16" fill="none"><rect x="5.2" y="4.2" width="9" height="6" stroke="#444" stroke-width="1.2"/><path d="M7.5 6.4 H11.8" stroke="#444" stroke-width="1"/><path d="M9.7 10.2 V13 M7.2 13.4 H12.2" stroke="#444" stroke-width="1.1"/><path d="M4.2 4.2 H15.2" stroke="#444" stroke-width="1.2"/></svg><div style="position:absolute;left:1121px;top:709.5px;width:7px;height:1px;background:#444"></div><div style="position:absolute;left:1132px;top:709px;width:83px;height:2px;background:#a6a6a6"></div><div style="position:absolute;left:1158.5px;top:704.5px;width:5px;height:11px;background:#555;border-radius:1px"></div><div style="position:absolute;left:1173.5px;top:706px;width:1px;height:7px;background:#777"></div><div style="position:absolute;left:1218px;top:709.5px;width:9px;height:1px;background:#444"></div><div style="position:absolute;left:1222px;top:705px;width:1px;height:9px;background:#444"></div><div class="t" style="left:1236.40px;top:706.58px;font-size:9px;line-height:9px;color:#444;letter-spacing:-0.3px;">71%</div><svg style="position:absolute;left:1261px;top:702px" width="16" height="16" viewBox="0 0 16 16" fill="none"><path d="M4 8 L1.5 8 L4 5.5 Z M12 8 L14.5 8 L12 5.5 Z M4 8 L1.5 8 L4 10.5 Z M12 8 L14.5 8 L12 10.5 Z M8 1.5 L5.5 4 H10.5 Z M8 14.5 L5.5 12 H10.5 Z" fill="#333"/><rect x="5.5" y="5.5" width="5" height="5" stroke="#333" stroke-width="1.2"/></svg></div>
</body></html>
